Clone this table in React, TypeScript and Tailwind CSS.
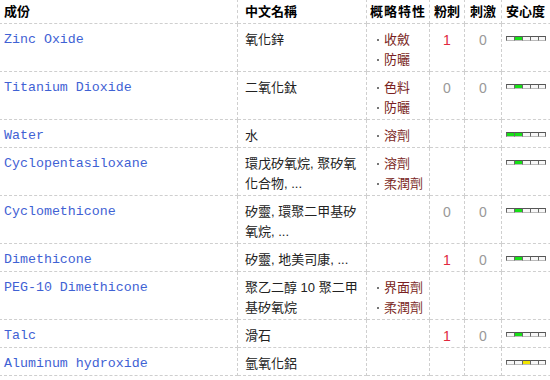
import React from "react"

type Row = {
  en: string
  zh: string
  props: string[]
  acne: string
  irr: string
  level: number
  color?: string
  both?: boolean
}

const rows: Row[] = [
  { en: "Zinc Oxide", zh: "氧化鋅", props: ["收斂", "防曬"], acne: "1", irr: "0", level: 2 },
  { en: "Titanium Dioxide", zh: "二氧化鈦", props: ["色料", "防曬"], acne: "0", irr: "0", level: 2 },
  { en: "Water", zh: "水", props: ["溶劑"], acne: "", irr: "", level: 2, both: true },
  { en: "Cyclopentasiloxane", zh: "環戊矽氧烷, 聚矽氧化合物, ...", props: ["溶劑", "柔潤劑"], acne: "", irr: "", level: 2 },
  { en: "Cyclomethicone", zh: "矽靈, 環聚二甲基矽氧烷, ...", props: [], acne: "0", irr: "0", level: 2 },
  { en: "Dimethicone", zh: "矽靈, 地美司康, ...", props: [], acne: "1", irr: "0", level: 2 },
  { en: "PEG-10 Dimethicone", zh: "聚乙二醇 10 聚二甲基矽氧烷", props: ["界面劑", "柔潤劑"], acne: "", irr: "", level: 0 },
  { en: "Talc", zh: "滑石", props: [], acne: "1", irr: "0", level: 2 },
  { en: "Aluminum hydroxide", zh: "氫氧化鋁", props: [], acne: "", irr: "", level: 3, color: "yellow" },
]

function SafetyBar({ level, color, both }: { level: number; color?: string; both?: boolean }) {
  if (level === 0) return null
  return (
    <div className="mt-[6px] flex">
      {[1, 2, 3, 4, 5].map((i) => {
        const on = i === level || (both && i < level)
        return (
          <div
            key={i}
            className={`h-[5px] w-[8px] border-t border-l border-b border-t-[#555] border-l-[#666] border-b-[#bbb] ${
              i === 5 ? "border-r border-r-[#666]" : ""
            } ${on ? (color === "yellow" ? "bg-[#f2e600]" : "bg-[#16e016]") : "bg-[#f7f7f7]"}`}
          />
        )
      })}
    </div>
  )
}

const cell = "border border-dashed border-[#cfcfcf] align-top pt-[6px] pb-[1px] leading-[20px]"
const head = "border border-dashed border-[#cfcfcf] pt-[2px] pb-[1px] leading-[20px]"

export default function App() {
  return (
    <div className="w-[550px] h-[380px] overflow-hidden bg-white text-[13px] text-[#222] font-['Liberation_Sans','Noto_Sans_CJK_TC',sans-serif]">
      <table className="w-[572px] -ml-px -mt-px table-fixed border-collapse">
        <colgroup>
          <col className="w-[238px]" />
          <col className="w-[129px]" />
          <col className="w-[63px]" />
          <col className="w-[35px]" />
          <col className="w-[37px]" />
          <col className="w-[70px]" />
        </colgroup>
        <thead>
          <tr className="font-bold text-black">
            <th className={`${head} pl-[4px] text-left`}>成份</th>
            <th className={`${head} pl-[7px] text-left`}>中文名稱</th>
            <th className={`${head} text-center tracking-[1px]`}>概略特性</th>
            <th className={`${head} text-center`}>粉刺</th>
            <th className={`${head} text-center`}>刺激</th>
            <th className={`${head} pl-[4px] text-left whitespace-nowrap`}>安心度</th>
          </tr>
        </thead>
        <tbody>
          {rows.map((r) => (
            <tr key={r.en}>
              <td className={`${cell} pl-[4px] font-['Liberation_Mono',monospace] text-[13.3px] text-[#3f62d4]`}>{r.en}</td>
              <td className={`${cell} pl-[7px] pr-[3px] text-[#222]`}>{r.zh}</td>
              <td className={`${cell} pl-[10px]`}>
                {r.props.map((p) => (
                  <div key={p} className="flex items-center gap-[5px] text-[#7a1f22]">
                    <span className="h-[2px] w-[2px] bg-[#777]" />
                    {p}
                  </div>
                ))}
              </td>
              <td className={`${cell} text-center text-[14px] ${r.acne === "1" ? "text-[#e0283c]" : "text-[#999]"}`}>{r.acne}</td>
              <td className={`${cell} text-center text-[14px] text-[#999]`}>{r.irr}</td>
              <td className={`${cell} pl-[4px]`}>
                <SafetyBar level={r.level} color={r.color} both={r.both} />
              </td>
            </tr>
          ))}
        </tbody>
      </table>
    </div>
  )
}
